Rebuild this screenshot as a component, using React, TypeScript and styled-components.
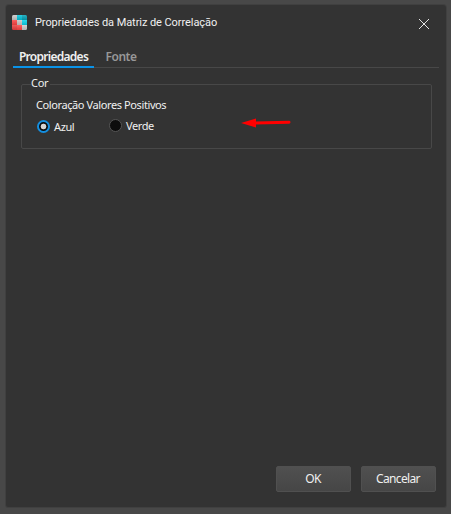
import React, { useState } from "react";
import styled, { createGlobalStyle } from "styled-components";

const GlobalStyle = createGlobalStyle`
  * { box-sizing: border-box; }
  body { margin: 0; background: #484848; overflow: hidden; }
`;

const Backdrop = styled.div`
  width: 451px;
  height: 514px;
  padding: 5px 5px 7px 6px;
  background: #484848;
  font-family: "Noto Sans", sans-serif;
  font-size: 11px;
  color: #f0f0f0;
`;

const Dialog = styled.section`
  display: flex;
  flex-direction: column;
  height: 502px;
  background: #333333;
  border-radius: 3px 3px 2px 2px;
  box-shadow: 0 0 0 1px #404040;
`;

const TitleBar = styled.header`
  display: flex;
  align-items: center;
  height: 36px;
  padding: 0 17px 0 6px;
  svg { display: block; flex: none; }
`;

const Title = styled.h1`
  flex: 1;
  margin: 0 0 1px 8px;
  font: 400 11px/16px Roboto, sans-serif;
  letter-spacing: -0.07px;
  white-space: nowrap;
`;

const CloseButton = styled.button`
  padding: 0;
  margin-top: 2px;
  border: 0;
  background: none;
`;

const TabList = styled.nav`
  display: flex;
  height: 27px;
  margin: 0 7px;
  box-shadow: inset 0 -1px #484848;
`;

const Tab = styled.button<{ $active: boolean }>`
  height: 27px;
  width: ${(p) => (p.$active ? 81 : 54)}px;
  padding: 5px 0 0;
  border: 0;
  border-bottom: 2px solid ${(p) => (p.$active ? "#0a93e8" : "transparent")};
  background: none;
  color: ${(p) => (p.$active ? "#f0f0f0" : "#989898")};
  font: 600 12px/17px "Noto Sans", sans-serif;
  letter-spacing: ${(p) => (p.$active ? -0.72 : -0.5)}px;
  white-space: nowrap;
`;

const Group = styled.fieldset`
  height: 73px;
  min-width: 0;
  margin: 8px 14px 0 15px;
  padding: 5px 14px 0;
  border: 1px solid #484848;
  border-radius: 2px;
  position: relative;
`;

const Legend = styled.legend`
  height: 16px;
  margin-left: -5px;
  padding: 0 2px 0 0;
  line-height: 14px;
  letter-spacing: -0.25px;
`;

const GroupLabel = styled.div`
  line-height: 16px;
  letter-spacing: -0.4px;
  white-space: nowrap;
`;

const Options = styled.div`
  display: flex;
  margin: 5px 0 0 1px;
`;

const Option = styled.label<{ $width: number }>`
  display: flex;
  align-items: center;
  gap: 4px;
  width: ${(p) => p.$width}px;
  height: 16px;
  letter-spacing: -0.4px;
`;

const VerdeOption = styled(Option)`
  margin-top: -1px;
`;

const Radio = styled.input`
  appearance: none;
  flex: none;
  width: 13px;
  height: 13px;
  margin: 0;
  border: 1px solid #555555;
  border-radius: 50%;
  background: #0c0c0c;
  &:checked {
    border: 2px solid #148fe0;
    background: radial-gradient(circle, #d4d4d4 0 2.5px, #0c0c0c 3.2px);
  }
`;

const Arrow = styled.svg`
  position: absolute;
  left: 219px;
  top: 26px;
`;

const Footer = styled.footer`
  display: flex;
  justify-content: flex-end;
  gap: 10px;
  margin-top: auto;
  padding: 0 10px 15px;
`;

const ActionButton = styled.button`
  width: 75px;
  height: 26px;
  padding: 0 1px 0 0;
  border: 1px solid #505050;
  border-radius: 2px;
  background: linear-gradient(#505050, #464646);
  color: #f0f0f0;
  font: 400 12px/16px "Noto Sans", sans-serif;
  letter-spacing: -0.65px;
`;

const tileColors = [
  ["#c9c9c9", "#05c4dc", "#07a4b9"],
  ["#ff4545", "#c8c8c8", "#09d5ed"],
  ["#ee4040", "#ff4646", "#cccccc"],
];

const MatrixSvg = styled.svg`
  margin-bottom: 1px;
  border-radius: 1.5px;
`;

function MatrixIcon() {
  return (
    <MatrixSvg width="15" height="15" viewBox="0 0 15 15" shapeRendering="crispEdges">
      <defs>
        <linearGradient id="tileShade" x1="0" y1="0" x2="0" y2="1">
          <stop offset="0" stopColor="#fff" stopOpacity="0.15" />
          <stop offset="1" stopColor="#000" stopOpacity="0.12" />
        </linearGradient>
      </defs>
      {tileColors.flatMap((row, y) =>
        row.map((fill, x) => (
          <g key={`${x}-${y}`} transform={`translate(${x * 5} ${y * 5})`}>
            <rect width="5" height="5" fill={fill} />
            <rect width="5" height="5" fill="url(#tileShade)" />
          </g>
        )),
      )}
    </MatrixSvg>
  );
}

export default function App() {
  const [color, setColor] = useState("azul");
  return (
    <>
      <GlobalStyle />
      <Backdrop>
        <Dialog>
          <TitleBar>
            <MatrixIcon />
            <Title>Propriedades da Matriz de Correlação</Title>
            <CloseButton aria-label="Fechar">
              <svg width="10" height="10" viewBox="0 0 10 10" stroke="#e4e4e4" strokeWidth="1">
                <path d="M0 0L10 10M10 0L0 10" />
              </svg>
            </CloseButton>
          </TitleBar>
          <TabList>
            <Tab $active>Propriedades</Tab>
            <Tab $active={false}>Fonte</Tab>
          </TabList>
          <Group>
            <Legend>Cor</Legend>
            <GroupLabel>Coloração Valores Positivos</GroupLabel>
            <Options>
              <Option $width={72}>
                <Radio type="radio" name="cor" checked={color === "azul"} onChange={() => setColor("azul")} />
                Azul
              </Option>
              <VerdeOption $width={60}>
                <Radio type="radio" name="cor" checked={color === "verde"} onChange={() => setColor("verde")} />
                Verde
              </VerdeOption>
            </Options>
            <Arrow width="50" height="10" viewBox="0 0 50 10">
              <path d="M0 5L15 .5V9.5Z" fill="#f00" />
              <path d="M14 5L48 4.3" stroke="#f00" strokeWidth="3" strokeLinecap="round" />
            </Arrow>
          </Group>
          <Footer>
            <ActionButton>OK</ActionButton>
            <ActionButton>Cancelar</ActionButton>
          </Footer>
        </Dialog>
      </Backdrop>
    </>
  );
}
